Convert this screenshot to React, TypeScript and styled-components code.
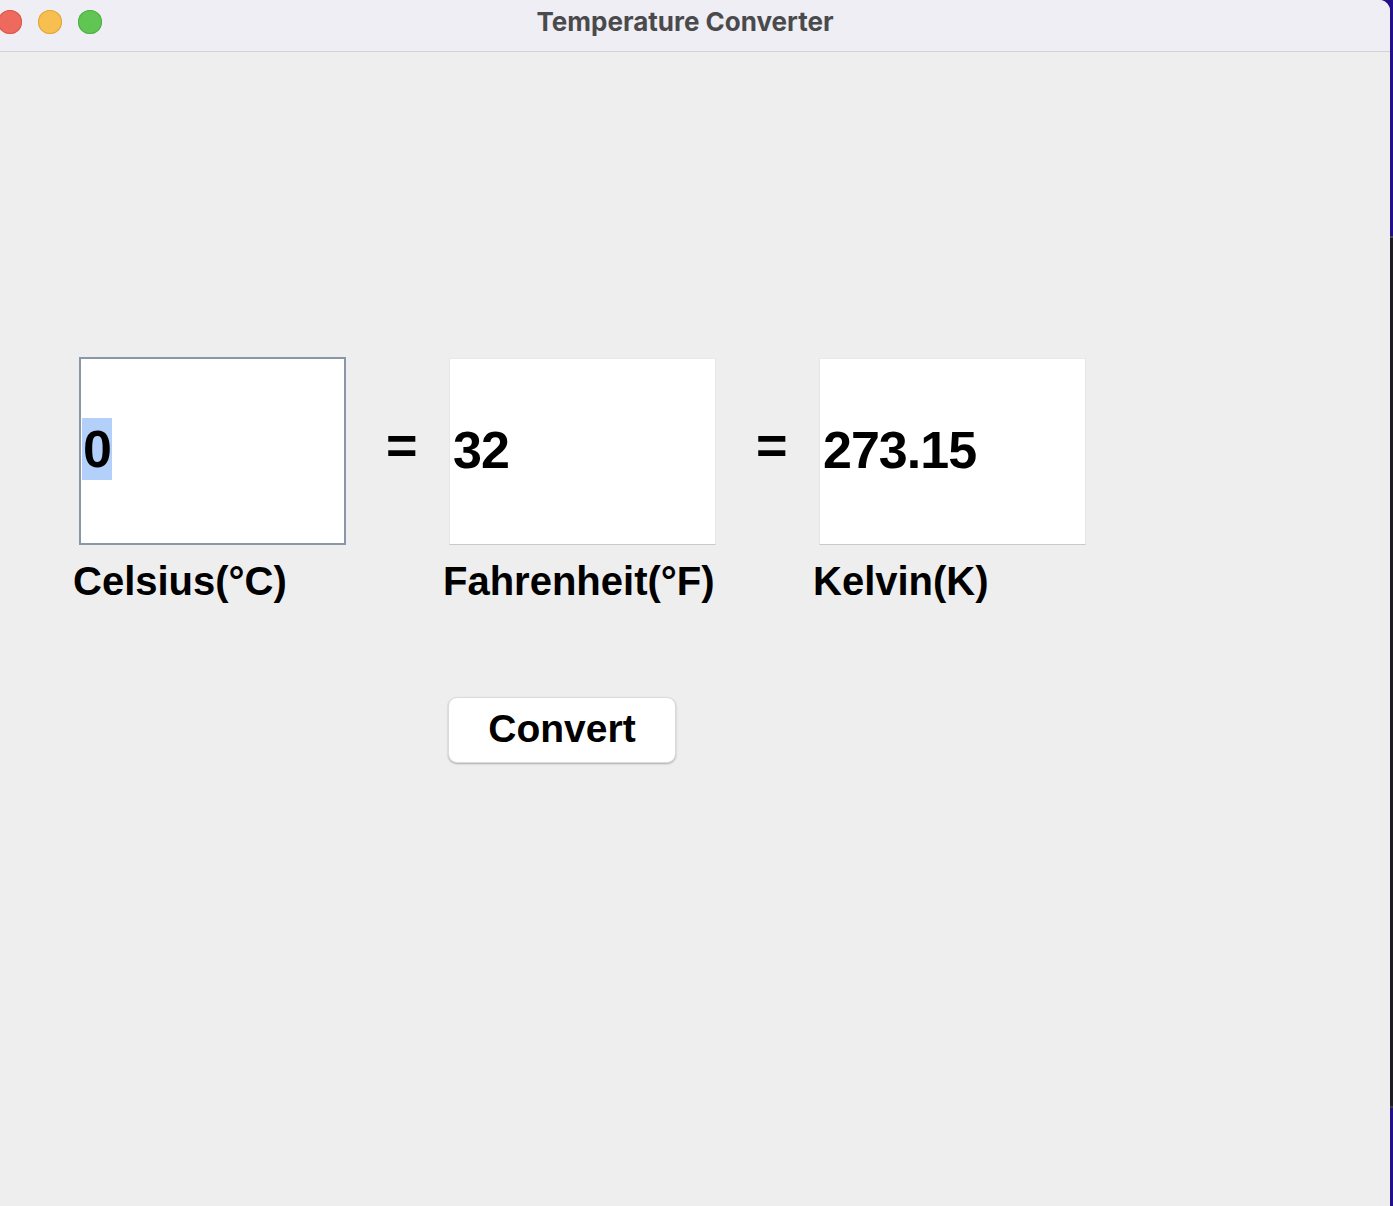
import React from "react";
import styled, { createGlobalStyle } from "styled-components";

const Global = createGlobalStyle`
  html, body { margin: 0; padding: 0; height: 100%; overflow: hidden; }
  body { background: #22108a; font-family: "Liberation Sans", Arial, sans-serif; }
  #root { height: 100%; }
`;

const Desktop = styled.div`
  display: flex;
  height: 100vh;
  width: 100vw;
  overflow: hidden;
`;

const Window = styled.div`
  flex: 1;
  margin-left: -20px;
  display: flex;
  flex-direction: column;
  background: #eeeeee;
  border-top-right-radius: 11px;
  overflow: hidden;
`;

const DesktopEdge = styled.div`
  width: 3px;
  flex: none;
  background: linear-gradient(
    to bottom,
    #22108a 0px,
    #22108a 236px,
    #4a4a52 236px,
    #4a4a52 238px,
    #1d1c22 238px,
    #1d1c22 1106px,
    #3a3a40 1106px,
    #3a3a40 1108px,
    #22108a 1108px
  );
`;

const TitleBar = styled.div`
  display: grid;
  grid-template-columns: 1fr auto 1fr;
  height: 51px;
  background: #efeef4;
  border-bottom: 1px solid #d3d3d6;
  flex: none;
`;

const Lights = styled.div`
  display: flex;
  gap: 16px;
  padding: 10px 0 0 18px;
`;

const Light = styled.span<{ $color: string; $edge: string }>`
  width: 24px;
  height: 24px;
  border-radius: 50%;
  background: ${(p) => p.$color};
  box-shadow: inset 0 0 0 1px ${(p) => p.$edge};
`;

const Title = styled.div`
  font-family: Inter, "Liberation Sans", sans-serif;
  font-weight: 700;
  font-size: 26px;
  line-height: 32px;
  padding-top: 6px;
  color: #4a4a4c;
  white-space: nowrap;
`;

const Content = styled.div`
  flex: 1;
  padding: 305px 0 0 93px;
`;

const Grid = styled.div`
  display: grid;
  grid-template-columns: 273px 97px 273px 97px 273px;
  align-items: start;
`;

const Column = styled.div`
  display: flex;
  flex-direction: column;
`;

const Field = styled.div<{ $focused?: boolean }>`
  box-sizing: border-box;
  margin-left: 6px;
  width: 267px;
  height: 188px;
  background: #ffffff;
  display: flex;
  align-items: center;
  padding-left: ${(p) => (p.$focused ? "1px" : "3px")};
  padding-bottom: 4px;
  border: ${(p) => (p.$focused ? "2px solid #8a97a8" : "1px solid #e6e6e6")};
  ${(p) => (p.$focused ? "" : "border-top-color: #e9e9e9; border-bottom-color: #c9c9c9; margin-top: 1px; height: 187px;")}
`;

const Value = styled.span<{ $selected?: boolean }>`
  font-family: "Liberation Sans", Arial, sans-serif;
  font-weight: 700;
  font-size: 52px;
  letter-spacing: -1px;
  line-height: 62px;
  color: #000;
  padding: 0 ${(p) => (p.$selected ? "1px" : "0")};
  background: ${(p) => (p.$selected ? "#b3d0fa" : "transparent")};
`;

const Label = styled.div`
  font-weight: 700;
  font-size: 40px;
  line-height: 46px;
  margin-top: 13px;
  color: #000;
  white-space: nowrap;
`;

const Equals = styled.div`
  font-weight: 700;
  font-size: 54px;
  line-height: 54px;
  padding: 61px 0 0 40px;
  color: #000;
`;

const ButtonRow = styled.div`
  grid-column: 3;
  padding-top: 93px;
`;

const Button = styled.button`
  box-sizing: border-box;
  margin-left: 5px;
  width: 228px;
  height: 66px;
  border-radius: 9px;
  background: #ffffff;
  border: 1px solid #dadada;
  box-shadow: 0 1px 2px rgba(0, 0, 0, 0.28);
  font-family: "Liberation Sans", Arial, sans-serif;
  font-weight: 700;
  font-size: 39px;
  color: #000;
  padding: 0 0 2px 0;
  cursor: pointer;
`;

export default function App() {
  return (
    <>
      <Global />
      <Desktop>
        <Window>
          <TitleBar>
            <Lights>
              <Light $color="#ee6a5f" $edge="#dc5549" />
              <Light $color="#f6bf4f" $edge="#dfa63a" />
              <Light $color="#61c554" $edge="#4fae43" />
            </Lights>
            <Title>Temperature Converter</Title>
            <div />
          </TitleBar>
          <Content>
            <Grid>
              <Column>
                <Field $focused>
                  <Value $selected>0</Value>
                </Field>
                <Label>Celsius(°C)</Label>
              </Column>
              <Equals>=</Equals>
              <Column>
                <Field>
                  <Value>32</Value>
                </Field>
                <Label>Fahrenheit(°F)</Label>
              </Column>
              <Equals>=</Equals>
              <Column>
                <Field>
                  <Value>273.15</Value>
                </Field>
                <Label>Kelvin(K)</Label>
              </Column>
              <ButtonRow>
                <Button>Convert</Button>
              </ButtonRow>
            </Grid>
          </Content>
        </Window>
        <DesktopEdge />
      </Desktop>
    </>
  );
}
